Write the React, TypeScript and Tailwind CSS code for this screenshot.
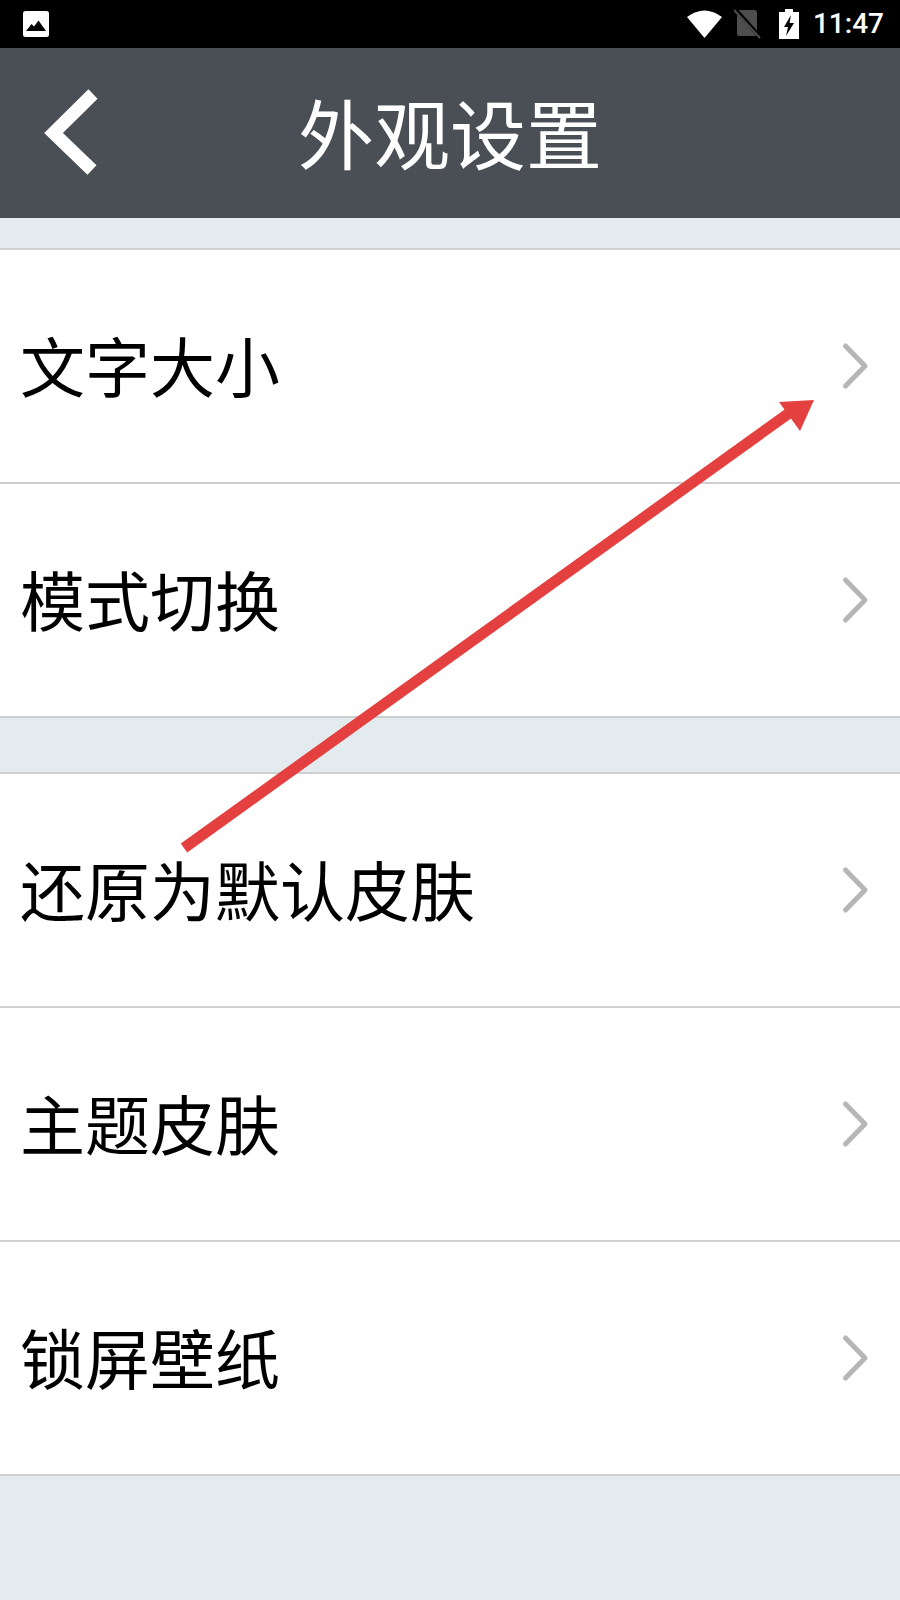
const FONT = "font-['Noto_Sans_CJK_SC','Noto_Sans',sans-serif]";

function Chevron() {
  return (
    <svg width="34" height="52" viewBox="0 0 34 52" className="shrink-0">
      <path d="M7.5 6 L27 26 L7.5 46" fill="none" stroke="#b6b6b6" strokeWidth="5" strokeLinecap="round" strokeLinejoin="round" />
    </svg>
  );
}

function Row({ label, last }: { label: string; last?: boolean }) {
  return (
    <div className={`flex h-[234px] items-center justify-between bg-white pl-[20px] pr-[28px] ${last ? "" : "border-b-2 border-[#cfcfcf]"}`}>
      <span className="mb-[4px] text-[65px] leading-none text-black">{label}</span>
      <Chevron />
    </div>
  );
}

export default function App() {
  return (
    <div className={`relative flex h-[1600px] w-[900px] flex-col overflow-hidden bg-[#e4ebee] ${FONT}`}>
      <div className="flex h-[48px] items-center justify-between bg-black pl-[23px] pr-[16px]">
        <svg width="26" height="26" viewBox="0 0 26 26">
          <rect x="0" y="0" width="26" height="26" rx="2.5" fill="#fff" />
          <path d="M3 20 L8.5 13 L11 15.5 L15.5 9.5 L23 20 Z" fill="#000" />
        </svg>
        <div className="flex items-center">
          <svg width="35" height="28" viewBox="0 0 35 28" className="mr-[12px]">
            <path d="M0 7 Q17.5 -6 35 7 L17.5 28 Z" fill="#fff" />
          </svg>
          <svg width="28" height="30" viewBox="0 0 28 30" className="mr-[17px]">
            <path d="M5 1 H20 Q23 1 23 4 V26 Q23 27 20 27 H5 Q3 27 3 25 V3 Q3 1 5 1 Z" fill="#4d4d4d" />
            <path d="M1 0 L27 29" stroke="#000" strokeWidth="4" />
            <path d="M0 1 L26 29" stroke="#4d4d4d" strokeWidth="2" />
          </svg>
          <svg width="20" height="30" viewBox="0 0 20 30" className="mr-[14px]">
            <path d="M6 0 H14 V3 H20 V30 H0 V3 H6 Z" fill="#fff" />
            <path d="M12 6 L5 18 H9 L7 27 L15 14 H10.5 Z" fill="#000" />
          </svg>
          <span className="font-['Roboto',sans-serif] text-[28px] leading-none font-medium text-white">11:47</span>
        </div>
      </div>

      <div className="relative flex h-[170px] items-center justify-center bg-[#4a4f56]">
        <svg width="58" height="90" viewBox="0 0 58 90" className="absolute left-[43px] top-[41px]">
          <path d="M50 5 L10.5 44 L49 81" fill="none" stroke="#fff" strokeWidth="13" strokeLinejoin="miter" />
        </svg>
        <span className="mb-[5px] text-[76px] leading-none text-white">外观设置</span>
      </div>

      <div className="h-[30px]" />
      <div className="border-t-2 border-[#cfcfcf]">
        <Row label="文字大小" />
        <Row label="模式切换" />
      </div>
      <div className="h-[54px]" />
      <div className="border-t-2 border-[#cfcfcf]">
        <Row label="还原为默认皮肤" />
        <Row label="主题皮肤" />
        <Row label="锁屏壁纸" />
      </div>

      <svg width="900" height="1600" viewBox="0 0 900 1600" className="pointer-events-none absolute left-0 top-0">
        <path d="M184 848 L792 411" stroke="#e54040" strokeWidth="11" fill="none" />
        <path d="M814 400 L779 402 L800 431 Z" fill="#e54040" />
      </svg>
    </div>
  );
}
